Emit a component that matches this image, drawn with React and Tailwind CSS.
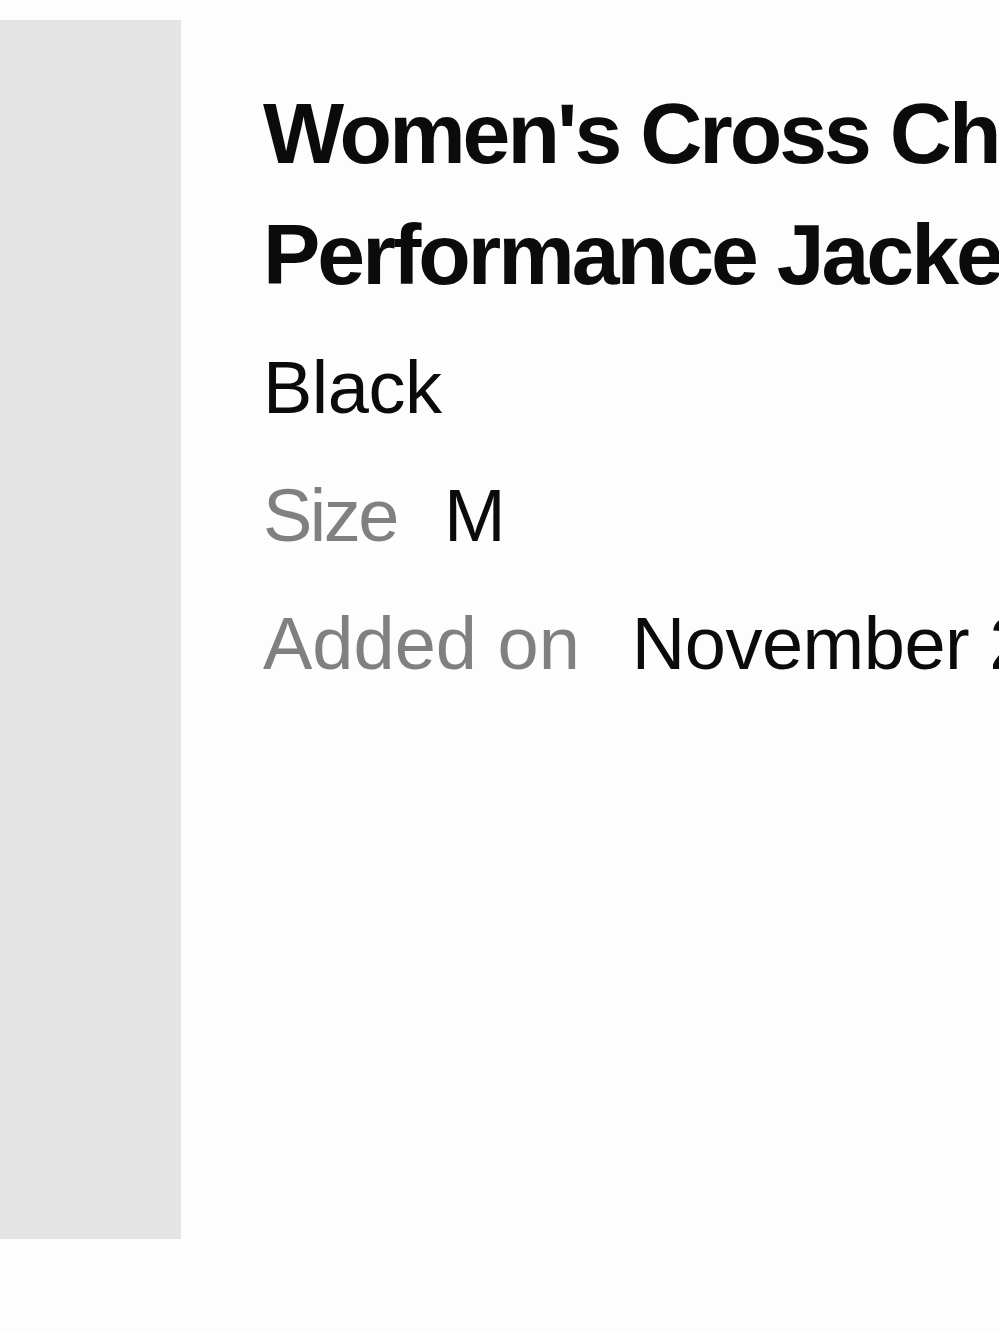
function App() {
  return (
    <div className="w-[999px] h-[1333px] overflow-hidden bg-[#fdfdfd] pt-5 flex" style={{ fontFamily: '"Liberation Sans", Arial, sans-serif' }}>
      <div className="w-[181px] h-[1219px] shrink-0 bg-[#e4e4e4]" />
      <div className="ml-[82px] w-[1100px] shrink-0 text-[#0b0b0b]">
        <h1 className="mt-[53px] w-[880px] text-[86px] leading-[121px] font-bold tracking-[-3px]">
          Women's Cross Chill Performance Jacket
        </h1>
        <div className="mt-[9px] text-[74px] leading-[128px]">
          <p className="tracking-[-0.5px]">Black</p>
          <p className="flex gap-[47px]">
            <span className="text-[#808080] tracking-[-2.5px]">Size</span>
            <span>M</span>
          </p>
          <p className="flex gap-[52px] whitespace-nowrap">
            <span className="text-[#808080]">Added on</span>
            <span className="tracking-[-0.5px]">November 21, 2024</span>
          </p>
        </div>
      </div>
    </div>
  )
}

export default App
